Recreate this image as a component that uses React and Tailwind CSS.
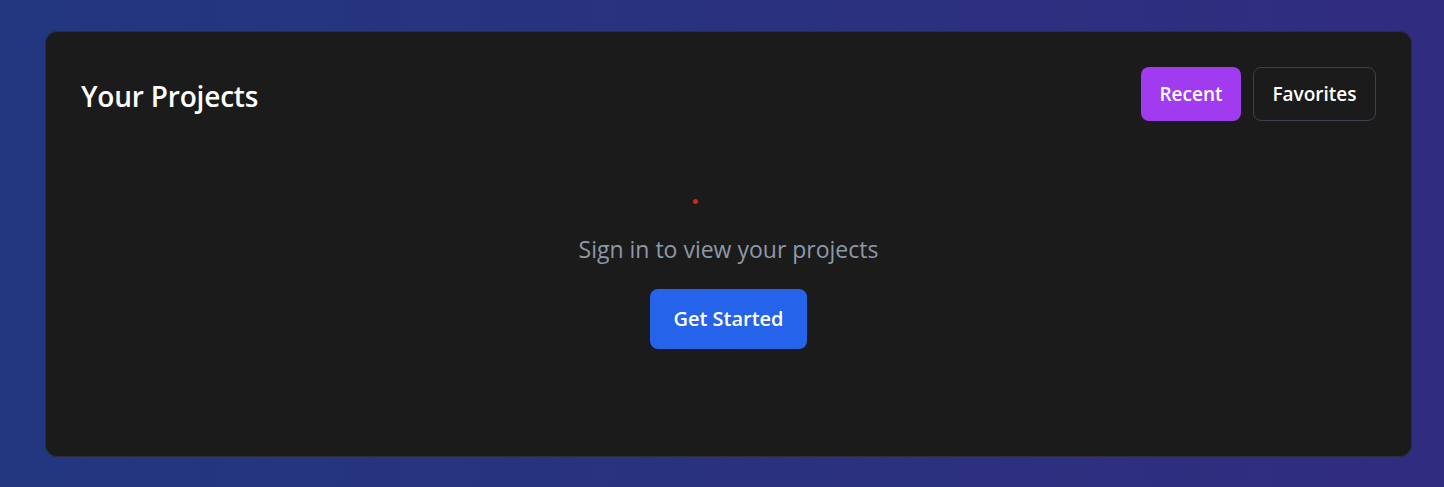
import React from "react";

function App() {
  return (
    <div
      className="min-h-screen w-full bg-gradient-to-r from-[#22377f] to-[#302c80] pl-[45px] pr-[32px] pt-[31px] pb-[30px]"
      style={{ fontFamily: '"Open Sans", "Noto Sans", sans-serif' }}
    >
      {/* Projects card */}
      <div className="h-[426px] rounded-xl border border-[#2c2f36] bg-[#1b1b1b] p-[35px] flex flex-col">
        {/* Header */}
        <div className="flex items-center justify-between h-[54px]">
          <h2 className="text-[28px] font-semibold text-white tracking-[-0.2px] mt-[3px]">Your Projects</h2>
          <div className="flex gap-3">
            <button className="h-[54px] w-[100px] rounded-lg bg-[#a13bef] text-[19px] font-semibold text-white">
              Recent
            </button>
            <button className="h-[54px] w-[123px] rounded-lg border border-[#3c424c] text-[19px] font-semibold text-white">
              Favorites
            </button>
          </div>
        </div>

        {/* Empty state */}
        <div className="flex flex-col items-center mt-[78px]">
          <div className="h-[5px] w-[5px] rounded-full bg-[#e0201f] -translate-x-[33px]"></div>
          <p className="mt-[29px] text-[23px] leading-[32px] text-[#8d98a8]">Sign in to view your projects</p>
          <button className="mt-[24px] h-[60px] w-[157px] rounded-lg bg-[#2563eb] text-[20px] font-semibold text-white">
            Get Started
          </button>
        </div>
      </div>
    </div>
  );
}

export default App;
